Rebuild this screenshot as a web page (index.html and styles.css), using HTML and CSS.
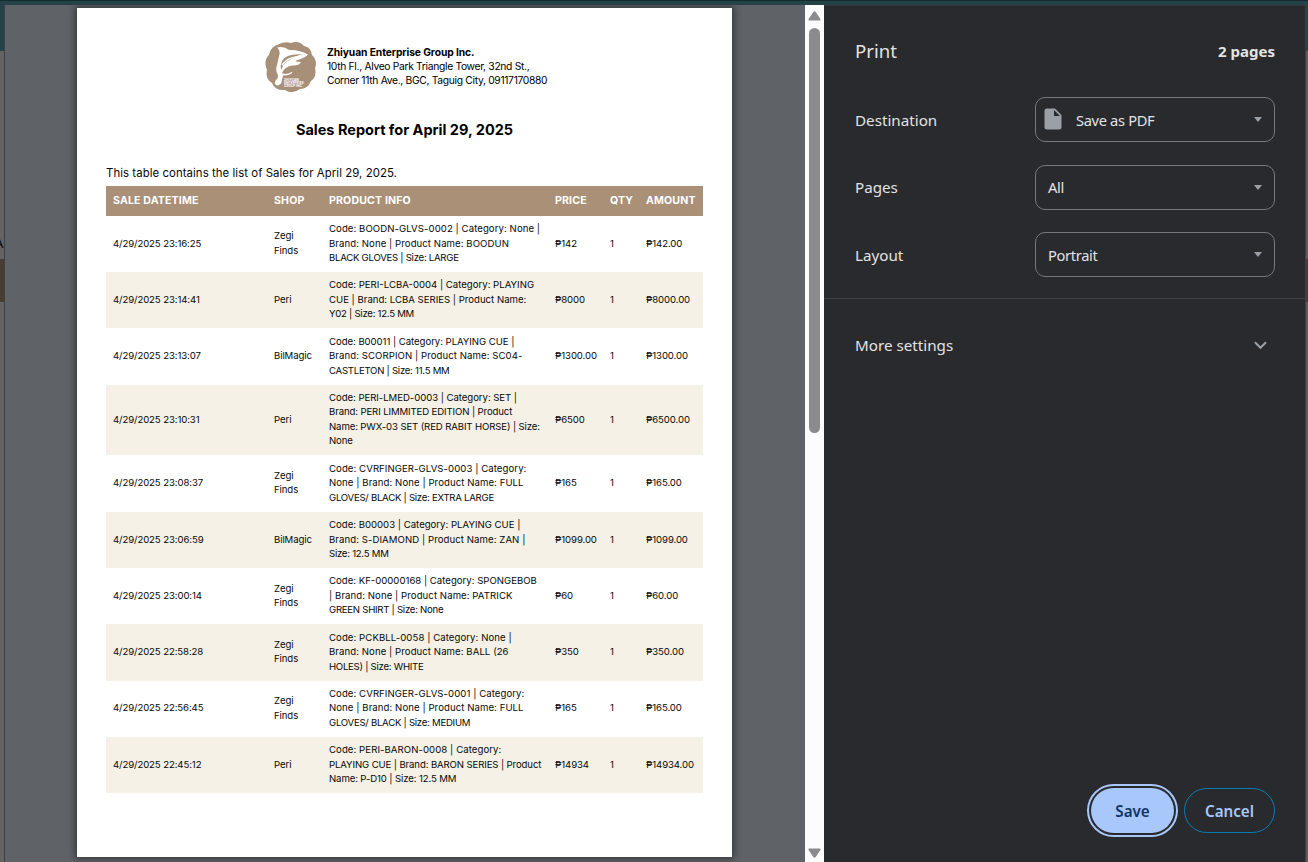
FILE: index.html
```html
<!DOCTYPE html>
<html lang="en">
<head>
<meta charset="utf-8">
<title>Print</title>
<link rel="stylesheet" href="styles.css">
</head>
<body>
<div class="edge edge-left"><span class="edge-letter">A</span><span class="edge-band"></span></div>
<main class="dialog">
  <section class="preview">
    <article class="paper">
      <header class="company">
        <svg class="logo" viewBox="0 0 52 52">
          <path fill="#a89078" d="M14 3Q20 0 26 2Q34-1 39 5Q46 6 47 14Q53 20 50 27Q52 36 46 40Q43 48 35 48Q27 54 20 49Q10 50 7 42Q0 38 2 29Q-2 20 4 14Q5 6 14 3Z"/>
          <path fill="#fff" d="M12 6.5Q19 5 24 9Q34 8.500 43 13.500Q40 17 31 19.500Q29 21 36 21Q34 25 27 24.500Q19 26 17 32Q19 35 17 38Q17 44 12 44.500Q8 43 11 39Q13 38 13 34Q10 29 12 24Q13 20 14 15Q16 10 12 6.500Z"/>
          <path fill="#a89078" d="M17 20Q21 12 39 13.500Q30 14 25 19Q20 20 16 29Q15 25 17 20Z"/>
          <path fill="none" stroke="#fff" stroke-width="1.400" d="M17 24Q22 17 31 16M18 25Q24 21 35 21.500M17 33Q22 35 27 31.500"/>
          <g class="logo-text"><text x="19" y="39.800">ZHIYUAN</text><text x="19" y="42.900">ENTERPRISE</text><text x="19" y="46">GROUP INC.</text></g>
        </svg>
        <div class="address"><b>Zhiyuan Enterprise Group Inc.</b><span>10th Fl., Alveo Park Triangle Tower, 32nd St.,</span><span>Corner 11th Ave., BGC, Taguig City, 09117170880</span></div>
      </header>
      <h1 class="title">Sales Report for April 29, 2025</h1>
      <p class="intro">This table contains the list of Sales for April 29, 2025.</p>
      <div class="table">
        <div class="row head"><div>SALE DATETIME</div><div>SHOP</div><div>PRODUCT INFO</div><div>PRICE</div><div>QTY</div><div>AMOUNT</div></div>
        <div class="row"><div>4/29/2025 23:16:25</div><div>Zegi<br>Finds</div><div><span class="wide">Code: BOODN-GLVS-0002 | Category: None |</span><span class="wide">Brand: None | Product Name: BOODUN</span><span class="tight">BLACK GLOVES | Size: LARGE</span></div><div>₱142</div><div>1</div><div>₱142.00</div></div>
        <div class="row"><div>4/29/2025 23:14:41</div><div>Peri</div><div><span class="mid">Code: PERI-LCBA-0004 | Category: PLAYING</span><span class="mid">CUE | Brand: LCBA SERIES | Product Name:</span><span class="tight">Y02 | Size: 12.5 MM</span></div><div>₱8000</div><div>1</div><div>₱8000.00</div></div>
        <div class="row"><div>4/29/2025 23:13:07</div><div>BilMagic</div><div><span class="near">Code: B00011 | Category: PLAYING CUE |</span><span class="wide">Brand: SCORPION | Product Name: SC04-</span><span class="tight">CASTLETON | Size: 11.5 MM</span></div><div>₱1300.00</div><div>1</div><div>₱1300.00</div></div>
        <div class="row"><div>4/29/2025 23:10:31</div><div>Peri</div><div><span class="near">Code: PERI-LMED-0003 | Category: SET |</span><span>Brand: PERI LIMMITED EDITION | Product</span><span>Name: PWX-03 SET (RED RABIT HORSE) | Size:</span><span>None</span></div><div>₱6500</div><div>1</div><div>₱6500.00</div></div>
        <div class="row"><div>4/29/2025 23:08:37</div><div>Zegi<br>Finds</div><div><span class="wide">Code: CVRFINGER-GLVS-0003 | Category:</span><span class="wide">None | Brand: None | Product Name: FULL</span><span class="tight">GLOVES/ BLACK | Size: EXTRA LARGE</span></div><div>₱165</div><div>1</div><div>₱165.00</div></div>
        <div class="row"><div>4/29/2025 23:06:59</div><div>BilMagic</div><div><span class="mid">Code: B00003 | Category: PLAYING CUE |</span><span class="wide">Brand: S-DIAMOND | Product Name: ZAN |</span><span class="tight">Size: 12.5 MM</span></div><div>₱1099.00</div><div>1</div><div>₱1099.00</div></div>
        <div class="row"><div>4/29/2025 23:00:14</div><div>Zegi<br>Finds</div><div><span class="mid">Code: KF-00000168 | Category: SPONGEBOB</span><span class="wide">| Brand: None | Product Name: PATRICK</span><span class="tight">GREEN SHIRT | Size: None</span></div><div>₱60</div><div>1</div><div>₱60.00</div></div>
        <div class="row"><div>4/29/2025 22:58:28</div><div>Zegi<br>Finds</div><div><span class="wide">Code: PCKBLL-0058 | Category: None |</span><span class="wide">Brand: None | Product Name: BALL (26</span><span class="tight">HOLES) | Size: WHITE</span></div><div>₱350</div><div>1</div><div>₱350.00</div></div>
        <div class="row"><div>4/29/2025 22:56:45</div><div>Zegi<br>Finds</div><div><span class="wide">Code: CVRFINGER-GLVS-0001 | Category:</span><span class="wide">None | Brand: None | Product Name: FULL</span><span class="tight">GLOVES/ BLACK | Size: MEDIUM</span></div><div>₱165</div><div>1</div><div>₱165.00</div></div>
        <div class="row"><div>4/29/2025 22:45:12</div><div>Peri</div><div><span class="wide">Code: PERI-BARON-0008 | Category:</span><span>PLAYING CUE | Brand: BARON SERIES | Product</span><span>Name: P-D10 | Size: 12.5 MM</span></div><div>₱14934</div><div>1</div><div>₱14934.00</div></div>
      </div>
    </article>
  </section>
  <div class="scrollbar">
    <svg width="13" height="10" viewBox="0 0 13 10"><path d="M1.2 9.5Q0 9.5.6 8L5.3 1.1Q6.5-.4 7.7 1.1L12.4 8Q13 9.5 11.8 9.5Z"/></svg>
    <span class="thumb"></span>
    <svg class="down" width="13" height="10" viewBox="0 0 13 10"><path d="M1.2.5Q0 .5.6 2L5.3 8.9Q6.5 10.4 7.7 8.9L12.4 2Q13 .5 11.8.5Z"/></svg>
  </div>
  <aside class="sidebar">
    <header class="top"><span class="print">Print</span><b>2 pages</b></header>
    <div class="fields">
      <div class="field"><label>Destination</label><div class="select dest"><svg width="18" height="22" viewBox="0 0 18 22"><path fill="#9aa0a6" fill-rule="evenodd" d="M2.5.5H11L17.5 7V19Q17.5 21.500 15 21.500H3Q.5 21.500.5 19V3Q.5.5 2.500.5ZM10 2V8H16Z"/></svg><span>Save as PDF</span><i class="arrow"></i></div></div>
      <div class="field"><label>Pages</label><div class="select"><span>All</span><i class="arrow"></i></div></div>
      <div class="field"><label>Layout</label><div class="select"><span>Portrait</span><i class="arrow"></i></div></div>
    </div>
    <div class="more"><span>More settings</span><svg width="13" height="9" viewBox="0 0 13 9"><path fill="none" stroke="#9aa0a6" stroke-width="2" d="M1 1.3L6.5 6.8L12 1.3"/></svg></div>
    <footer class="actions"><button class="save">Save</button><button class="cancel">Cancel</button></footer>
  </aside>
</main>
<div class="edge edge-right"><span class="edge-band"></span></div>
</body>
</html>
```
FILE: styles.css
```css
* { box-sizing: border-box; }
body { margin: 0; width: 1308px; height: 862px; overflow: hidden; display: flex; padding-top: 5px; background: linear-gradient(#142b30 0 1px, #244247 1px 5px, #606060 5px); font-family: "Noto Sans", sans-serif; }
.edge { flex: none; overflow: hidden; background: linear-gradient(#244247 0 46px, #646361 46px); display: flex; flex-direction: column; }
.edge-left { width: 5px; border-right: 1px solid #394347; }
.edge-right { width: 3px; border-left: 1px solid #3c4043; background: linear-gradient(#244247 0 46px, #5c5c5b 46px); }
.edge-letter { margin: 228px 0 0 -6px; height: 21px; font: 15px/18px "Open Sans", sans-serif; color: #0b0b10; }
.edge-band { height: 43px; margin-top: 5px; background: #483d32; }
.edge-right .edge-band { margin-top: 254px; }
.dialog { flex: 1; display: flex; min-width: 0; }
.preview { width: 800px; background: #5f6368; padding: 3px 0 5px 72px; overflow: hidden; }
.paper { width: 655px; height: 849px; background: #fff; box-shadow: 0 0 7px 2px rgba(0,0,0,.45); padding: 33px 29px 0; font-family: Inter, sans-serif; color: #080808; }
.company { display: flex; height: 52px; padding-left: 159px; gap: 10px; }
.logo { width: 52px; height: 52px; flex: none; }
.logo-text { font: 700 3.2px Inter, sans-serif; fill: #fff; }
.address { display: flex; flex-direction: column; padding-top: 3.5px; font-size: 10.3px; line-height: 14.4px; color: #000; white-space: nowrap; letter-spacing: -.32px; }
.address b { letter-spacing: -.1px; }
.title { margin: 27px 0 0; font-size: 14.5px; line-height: 20px; text-align: center; color: #000; }
.intro { margin: 25px 0 0; height: 21px; font-size: 11.4px; line-height: 16px; letter-spacing: .06px; white-space: nowrap; }
.table { font-size: 9.6px; line-height: 14.43px; width: 597px; }
.row { display: grid; grid-template-columns: 161px 55px 226px 55px 36px 64px; align-items: center; padding: 6.5px 0; white-space: nowrap; }
.row > div { padding-left: 7px; letter-spacing: -.1px; }
.row span { display: block; letter-spacing: -.12px; }
.row .wide { letter-spacing: .07px; }
.row .mid { letter-spacing: 0; }
.row .near { letter-spacing: -.05px; }
.row .tight { letter-spacing: -.26px; }
.row:nth-child(odd) { background: #f5f1e6; }
.row.head { height: 29.6px; background: #a99077; color: #fff; font-weight: 700; font-size: 10.6px; }
.row.head > div { letter-spacing: .14px; }
.scrollbar { width: 19px; background: #fcfcfc; display: flex; flex-direction: column; align-items: center; padding: 6px 0 4px; fill: #8b8b8b; }
.thumb { width: 11px; height: 405px; margin-top: 7px; border-radius: 6px; background: #8b8b8b; }
.down { margin-top: auto; }
.sidebar { flex: 1; background: #292a2d; color: #e3e3e3; font-size: 15.2px; display: flex; flex-direction: column; border-top: 1px solid #34383b; }
.top { display: flex; justify-content: space-between; align-items: center; height: 91px; padding: 0 30px 2px 31px; }
.print { font-size: 18.6px; }
.top b { font-size: 15px; }
.fields { display: flex; flex-direction: column; gap: 22.5px; padding: 0 30px 21px 31px; border-bottom: 1px solid #3f4144; }
.field { display: flex; align-items: center; justify-content: space-between; height: 45px; }
.select { display: flex; align-items: center; width: 240px; height: 45px; border: 1px solid #77787a; border-radius: 10px; padding: 0 12px; font-size: 14.7px; letter-spacing: -.35px; }
.dest { padding-left: 8px; gap: 14px; }
.dest svg { margin-bottom: 1px; }
.arrow { margin-left: auto; border: 4.5px solid transparent; border-top: 5px solid #9aa0a6; border-bottom: 0; }
.more { display: flex; justify-content: space-between; align-items: center; height: 92px; padding: 0 38px 0 31px; }
.actions { margin-top: auto; display: flex; justify-content: flex-end; gap: 10px; padding: 0 30px 29px; }
button { height: 45px; border-radius: 23px; font: 600 15.2px "Noto Sans", sans-serif; padding: 0; }
.save { width: 83px; border: 0; background: #a8c7fa; color: #123568; box-shadow: 0 0 0 2px #292a2d, 0 0 0 4px #a8c7fa; }
.cancel { width: 91px; border: 1px solid #087caf; background: transparent; color: #a8c7fa; }
```
